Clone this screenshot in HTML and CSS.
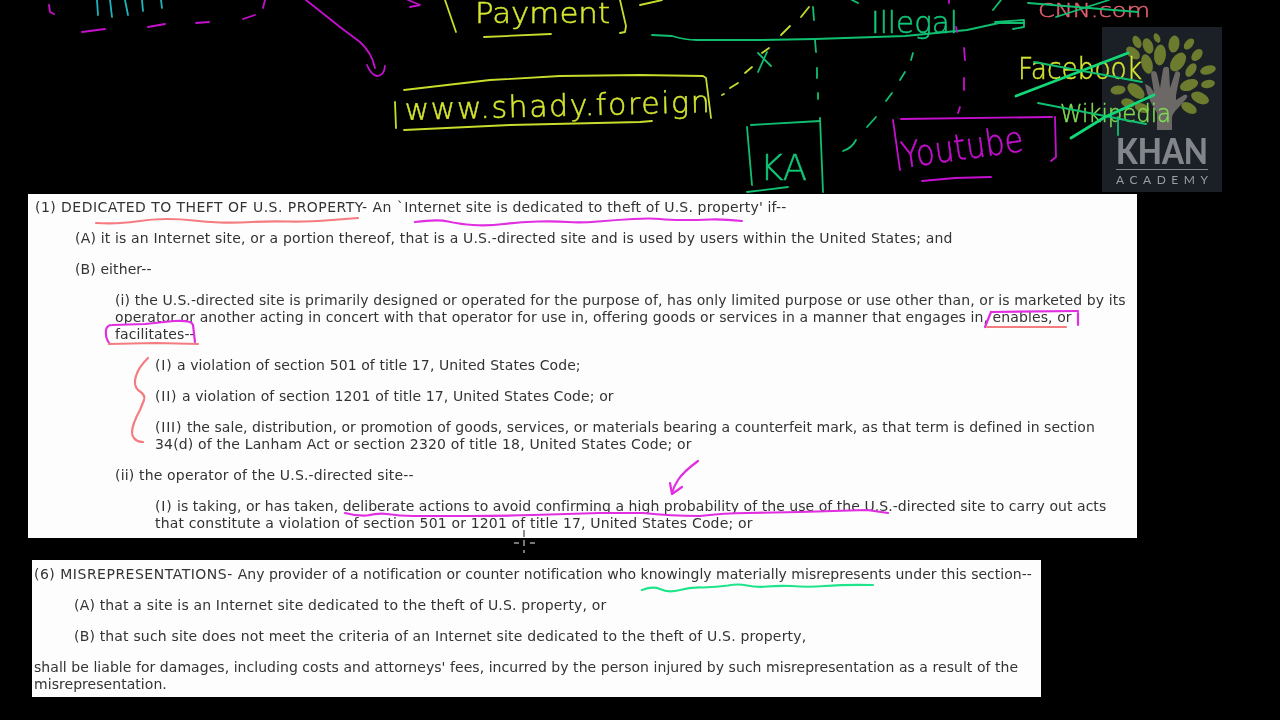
FILE: index.html
```html
<!DOCTYPE html>
<html lang="en">
<head>
<meta charset="utf-8">
<title>Khan Academy - SOPA</title>
<link rel="stylesheet" href="styles.css">
</head>
<body>
<main class="page">
  <section class="doc doc-one">
    <p><span class="caps">(1) DEDICATED TO THEFT OF U.S. PROPERTY- An `</span><span class="airy">Internet site is dedicated to theft of U.S. property' if--</span></p>
    <p class="i1 airy">(A) it is an Internet site, or a portion thereof, that is a U.S.-directed site and is used by users within the United States; and</p>
    <p class="i1">(B) either--</p>
    <p class="i2">(i) the U.S.-directed site is primarily designed or operated for the purpose of, has only limited purpose or use other than, or is marketed by its<br>operator or another acting in concert with that operator for use in, offering goods or services in a manner that engages in, enables, or<br>facilitates--</p>
    <p class="i3"><span class="roman">(I)</span> a violation of section 501 of title 17, United States Code;</p>
    <p class="i3"><span class="roman">(II)</span> a violation of section 1201 of title 17, United States Code; or</p>
    <p class="i3"><span class="roman">(III)</span> <span class="tight">the sale, distribution, or promotion of goods, services, or materials bearing a counterfeit mark, as that term is defined in section</span><br><span class="airy">34(d) of the Lanham Act or section 2320 of title 18, United States Code; or</span></p>
    <p class="i2 airy">(ii) the operator of the U.S.-directed site--</p>
    <p class="i3"><span class="roman">(I)</span> <span class="tight">is taking, or has taken, deliberate actions to avoid confirming a high probability of the use of the U.S.-directed site to carry out acts</span><br><span class="airy">that constitute a violation of section 501 or 1201 of title 17, United States Code; or</span></p>
  </section>
  <section class="doc doc-two">
    <p><span class="caps-two">(6) MISREPRESENTATIONS- </span><span class="tighter">Any provider of a notification or counter notification who knowingly materially misrepresents under this section--</span></p>
    <p class="i1 airy">(A) that a site is an Internet site dedicated to the theft of U.S. property, or</p>
    <p class="i1 airy">(B) that such site does not meet the criteria of an Internet site dedicated to the theft of U.S. property,</p>
    <p class="tight">shall be liable for damages, including costs and attorneys' fees, incurred by the person injured by such misrepresentation as a result of the<br>misrepresentation.</p>
  </section>
</main>

<svg class="board" viewBox="0 0 1280 720" width="1280" height="720" aria-label="Hand-drawn blackboard notes">
  <!-- Khan Academy watermark -->
  <rect class="k-bg" x="1102" y="27" width="120" height="165"/>
  <g class="k-leaf">
    <ellipse cx="1137" cy="42" rx="4" ry="6.5" transform="rotate(-25 1137 42)"/>
    <ellipse cx="1148" cy="46" rx="5" ry="8" transform="rotate(-20 1148 46)"/>
    <ellipse cx="1157" cy="38" rx="3" ry="5" transform="rotate(-25 1157 38)"/>
    <ellipse cx="1174" cy="44" rx="5.5" ry="8.5" transform="rotate(8 1174 44)"/>
    <ellipse cx="1189" cy="44" rx="4" ry="6.5" transform="rotate(40 1189 44)"/>
    <ellipse cx="1160" cy="55" rx="6" ry="10.5" transform="rotate(5 1160 55)"/>
    <ellipse cx="1178" cy="62" rx="6.5" ry="10.5" transform="rotate(35 1178 62)"/>
    <ellipse cx="1197" cy="55" rx="4.5" ry="7" transform="rotate(40 1197 55)"/>
    <ellipse cx="1133" cy="53" rx="5" ry="8" transform="rotate(-50 1133 53)"/>
    <ellipse cx="1147" cy="64" rx="5.5" ry="10" transform="rotate(-15 1147 64)"/>
    <ellipse cx="1191" cy="70" rx="4.5" ry="7.5" transform="rotate(35 1191 70)"/>
    <ellipse cx="1208" cy="70" rx="4.5" ry="8" transform="rotate(75 1208 70)"/>
    <ellipse cx="1189" cy="85" rx="5.5" ry="9.5" transform="rotate(70 1189 85)"/>
    <ellipse cx="1208" cy="84" rx="4" ry="7" transform="rotate(80 1208 84)"/>
    <ellipse cx="1118" cy="90" rx="4.5" ry="7.5" transform="rotate(85 1118 90)"/>
    <ellipse cx="1136" cy="91" rx="6" ry="10" transform="rotate(-50 1136 91)"/>
    <ellipse cx="1200" cy="98" rx="5.5" ry="9.5" transform="rotate(-65 1200 98)"/>
    <ellipse cx="1189" cy="108" rx="5" ry="8.5" transform="rotate(-60 1189 108)"/>
    <ellipse cx="1128" cy="103" rx="4.5" ry="7" transform="rotate(-75 1128 103)"/>
    <ellipse cx="1142" cy="108" rx="4.5" ry="7.5" transform="rotate(-70 1142 108)"/>
  </g>
  <path class="k-hand" d="M1157 130 L1157 113 C1152 105 1147 96 1145 84 C1149 85 1152 88 1154 93 L1151 74 C1151 70 1156 70 1157 74 L1160 88 L1163 69 C1164 66 1169 66 1169 69 L1170 88 L1175 73 C1176 70 1181 71 1180 75 L1176 95 L1176 100 L1184 95 C1188 94 1188 97 1186 99 L1178 108 C1174 112 1172 115 1172 118 L1172 130 Z"/>
  <text class="k-khan" x="1116" y="164" textLength="92" lengthAdjust="spacingAndGlyphs">KHAN</text>
  <rect class="k-rule" x="1116" y="169" width="92" height="1"/>
  <text class="k-academy" x="1116" y="184" textLength="92">ACADEMY</text>

  <!-- top-left strokes -->
  <g class="ink cyan">
    <path d="M97 0 L98 15"/><path d="M110 0 L112 17"/><path d="M125 0 L128 15"/><path d="M142 0 L143 11"/><path d="M161 0 L162 8"/>
  </g>
  <g class="ink magenta">
    <path d="M49 5 L50 12 L54 14"/>
    <path d="M82 32 L105 29"/><path d="M148 27 L165 24"/><path d="M196 23 L209 22"/><path d="M243 19 L255 15"/><path d="M263 8 L265 0"/>
    <path d="M306 0 L340 27 L360 42 Q372 53 375 68"/>
    <path d="M367 65 Q371 75 377 76 Q384 76 385 66"/>
    <path d="M408 0 L420 5 L410 7"/>
  </g>

  <!-- yellow writing -->
  <g class="ink yellow">
    <path d="M445 0 L456 32"/><path d="M620 0 L626 26 L625 32 L620 33"/><path d="M484 37 L551 34"/>
    <path d="M404 90 L490 80 L560 76 L640 75 L703 76 L706 78 L711 118"/>
    <path d="M395 102 L396 128"/>
    <path d="M404 130 L510 125 L640 122 L652 121"/>
    <path d="M640 5 L662 0"/><path d="M801 17 L809 7"/><path d="M781 35 L790 26"/><path d="M762 53 L769 48"/><path d="M745 73 L752 67"/><path d="M730 88 L738 83"/><path d="M722 95 L724 94"/>
  </g>
  <text class="hand yellow-t pay" x="475" y="23" textLength="135" lengthAdjust="spacingAndGlyphs">Payment</text>
  <text class="hand yellow-t" x="405" y="120" textLength="305" lengthAdjust="spacing" transform="rotate(-1.5 405 120)">www.shady.foreign</text>
  <text class="hand yellow-t face" x="1018" y="79" textLength="124" lengthAdjust="spacingAndGlyphs">Facebook</text>
  <text class="hand yellow-t wiki" x="1060" y="122" textLength="111" lengthAdjust="spacingAndGlyphs">Wikipedia</text>

  <!-- green lines -->
  <g class="ink green">
    <path d="M652 35 L672 36 Q685 40 697 40 L760 40 L815 39 L905 36 L967 30 L999 23 L1024 23"/>
    <path d="M995 22 L1024 20 L1024 27 L1013 29"/>
    <path d="M758 72 L767 52"/><path d="M758 53 L771 66"/>
    <path d="M813 7 L814 20"/><path d="M815 40 L816 52"/><path d="M817 68 L817 78"/><path d="M818 93 L818 99"/>
    <path d="M993 10 L1001 0"/><path d="M852 0 L858 3"/>
    <path d="M911 60 L913 53"/><path d="M900 80 L905 72"/><path d="M886 101 L892 93"/><path d="M867 127 L876 117"/><path d="M843 151 Q852 148 856 140"/>
    <path d="M747 127 L752 185"/><path d="M751 125 L820 121"/><path d="M820 118 L823 192"/><path d="M747 192 L788 187"/>
  </g>
  <text class="hand green-t" x="871" y="33" textLength="87" lengthAdjust="spacingAndGlyphs">Illegal</text>
  <text class="hand green-t ka" x="760" y="180" textLength="47" lengthAdjust="spacingAndGlyphs">KA</text>

  <!-- red CNN -->
  <text class="hand red-t" x="1038" y="17" textLength="112" lengthAdjust="spacingAndGlyphs">CNN.com</text>

  <!-- YouTube -->
  <g class="ink magenta">
    <path d="M949 0 L949 3"/><path d="M956 27 L957 32"/><path d="M964 48 L965 60"/><path d="M964 78 L964 90"/><path d="M960 107 L958 113"/>
    <path d="M893 120 L900 170"/><path d="M901 119 L1052 117"/><path d="M1055 117 L1056 157 L1051 161"/><path d="M922 181 L955 178 L991 177"/>
  </g>
  <text class="hand magenta-t" x="903" y="168" textLength="123" lengthAdjust="spacingAndGlyphs" transform="rotate(-8 903 168)">Youtube</text>

  <!-- strike-outs -->
  <g class="ink green">
    <path d="M1028 3 L1138 12"/><path d="M1056 17 L1109 0"/>
    <path class="thick" d="M1016 96 L1128 53"/><path d="M1034 62 L1142 82"/>
    <path d="M1038 103 L1146 124"/><path class="thick" d="M1071 138 L1105 117 L1154 95"/><path d="M1118 117 L1118 135"/>
  </g>

  <!-- annotations on the text -->
  <g class="ink note">
    <path class="red" d="M96 223 Q120 224 136 221.5 Q152 219 166.5 219 Q181 219 193.5 220.5 Q206 222 220 222.5 Q234 223 252 222 Q270 221 288 221.5 Q306 222 332 220 L358 218"/>
    <path class="pink" d="M415 222 Q438 219 448 221.5 Q459 224 473 225 Q488 226 504 224 Q520 222 538 221.5 Q556 221 568 222 Q580 223 598 221.5 Q616 220 633 219 Q651 218 660 219 Q669 220 683 220 Q698 220 710 219.5 Q723 219 742 221"/>
    <path class="pink" d="M109 343 Q105 337 106 330 Q107 325 112 325 L145 324 L174 321 Q192 320 193 325 L195 342"/>
    <path class="red" d="M109 344 L156 343 L198 344"/>
    <path class="pink" d="M991 312 L1078 311"/><path class="pink" d="M1078 313 L1078 325"/><path class="pink" d="M991 312 L985 327"/>
    <path class="red" d="M987 327 L1066 327"/>
    <path class="red" d="M148 358 Q138 368 136 376 Q133 385 138 390 Q146 395 144 400 Q142 405 140 410 Q136 417 134 423 Q130 434 134 438 Q137 442 143 442"/>
    <path class="pink" d="M345 513 Q356 516 367 515.5 Q378 513 387 514 Q400 516 413 516 Q440 516 467 516 Q500 516 533 515 L600 513 L643 513 Q670 516 700 516 Q725 513 747 513 L800 512 L867 510 L888 513"/>
    <path class="pink" d="M698 461 Q683 472 678 480 Q674 486 672 493"/><path class="pink" d="M670 483 L672 494 L682 487"/>
    <path class="mint" d="M642 590 Q653 586 660 589 Q668 593 680 590 Q690 587 703 587.5 Q717 587 728 585.5 Q738 583.5 747 585.5 Q757 587.5 767 586.5 Q777 585.5 792 586 Q807 587.5 825 586 Q843 584.5 873 585"/>
  </g>

  <!-- pen cursor -->
  <g class="cursor">
    <path class="on-paper" d="M524 530 L524 537"/>
    <path class="on-board" d="M514 543 L519 543 M530 543 L535 543 M524 540 L524 546 M524 550 L524 553"/>
  </g>
</svg>
</body>
</html>
```

FILE: styles.css
```css
* { box-sizing: border-box; }
html, body { margin: 0; height: 720px; overflow: hidden; background: #000; }
body { position: relative; font-family: "DejaVu Sans", Verdana, sans-serif; }

.page { display: flex; flex-direction: column; align-items: flex-start; padding-top: 194px; gap: 22px; }

.doc { background: #fdfdfd; color: #333; font-size: 14px; letter-spacing: 0.1px; line-height: 17px; white-space: nowrap; }
.doc p { margin: 0 0 14px; filter: blur(0.3px); }
.doc p:last-child { margin-bottom: 0; }
.doc .i1 { margin-left: 40px; }
.doc .i2 { margin-left: 80px; }
.doc .i3 { margin-left: 120px; }
.doc-one { margin-left: 28px; width: 1109px; height: 344px; padding: 5px 0 0 7px; }
.doc-two { margin-left: 32px; width: 1009px; height: 137px; padding: 6px 0 0 2px; }

.caps { letter-spacing: 0.46px; }
.caps-two { letter-spacing: 0.5px; }
.airy { letter-spacing: 0.17px; }
.tight { letter-spacing: 0.05px; }
.tighter { letter-spacing: 0.02px; }
.roman { letter-spacing: 0.8px; }

.board { position: absolute; left: 0; top: 0; pointer-events: none; filter: blur(0.3px); }

.ink { fill: none; stroke-width: 1.8; stroke-linecap: round; stroke-linejoin: round; }
.cyan { stroke: #1fb5bd; }
.magenta { stroke: #c70fd0; }
.yellow { stroke: #c8dc2c; }
.green { stroke: #10c070; }
.green .thick { stroke: #12d878; stroke-width: 2.8; }
.note { stroke-width: 2.2; }
.red { stroke: #f47c80; }
.pink { stroke: #e02ee0; }
.mint { stroke: #1fe58a; }

.hand { font-family: "DejaVu Sans", sans-serif; font-weight: 200; font-size: 30px; stroke-width: 0.5; }
.yellow-t { fill: #d4e62e; stroke: #d4e62e; }
.green-t { fill: #10c878; stroke: #10c878; }
.magenta-t { fill: #c70fd0; stroke: #c70fd0; font-size: 36px; }
.red-t { fill: #e0606e; stroke: #e0606e; font-size: 20px; }
.pay { font-size: 29px; }
.face { font-size: 30px; }
.wiki { font-size: 24px; fill: #7fdc50; stroke: #7fdc50; }
.ka { font-size: 36px; }

.k-bg { fill: #1b2027; }
.k-leaf { fill: #6c7b2e; }
.k-hand { fill: #6b6866; }
.k-khan { fill: #82858a; font-family: Lato, sans-serif; font-weight: 900; font-size: 36px; }
.k-rule { fill: #82858a; }
.k-academy { fill: #9a9da1; font-family: Lato, sans-serif; font-size: 12px; }

.cursor { fill: none; stroke-width: 1; }
.on-paper { stroke: #222; }
.on-board { stroke: #eee; }
```
